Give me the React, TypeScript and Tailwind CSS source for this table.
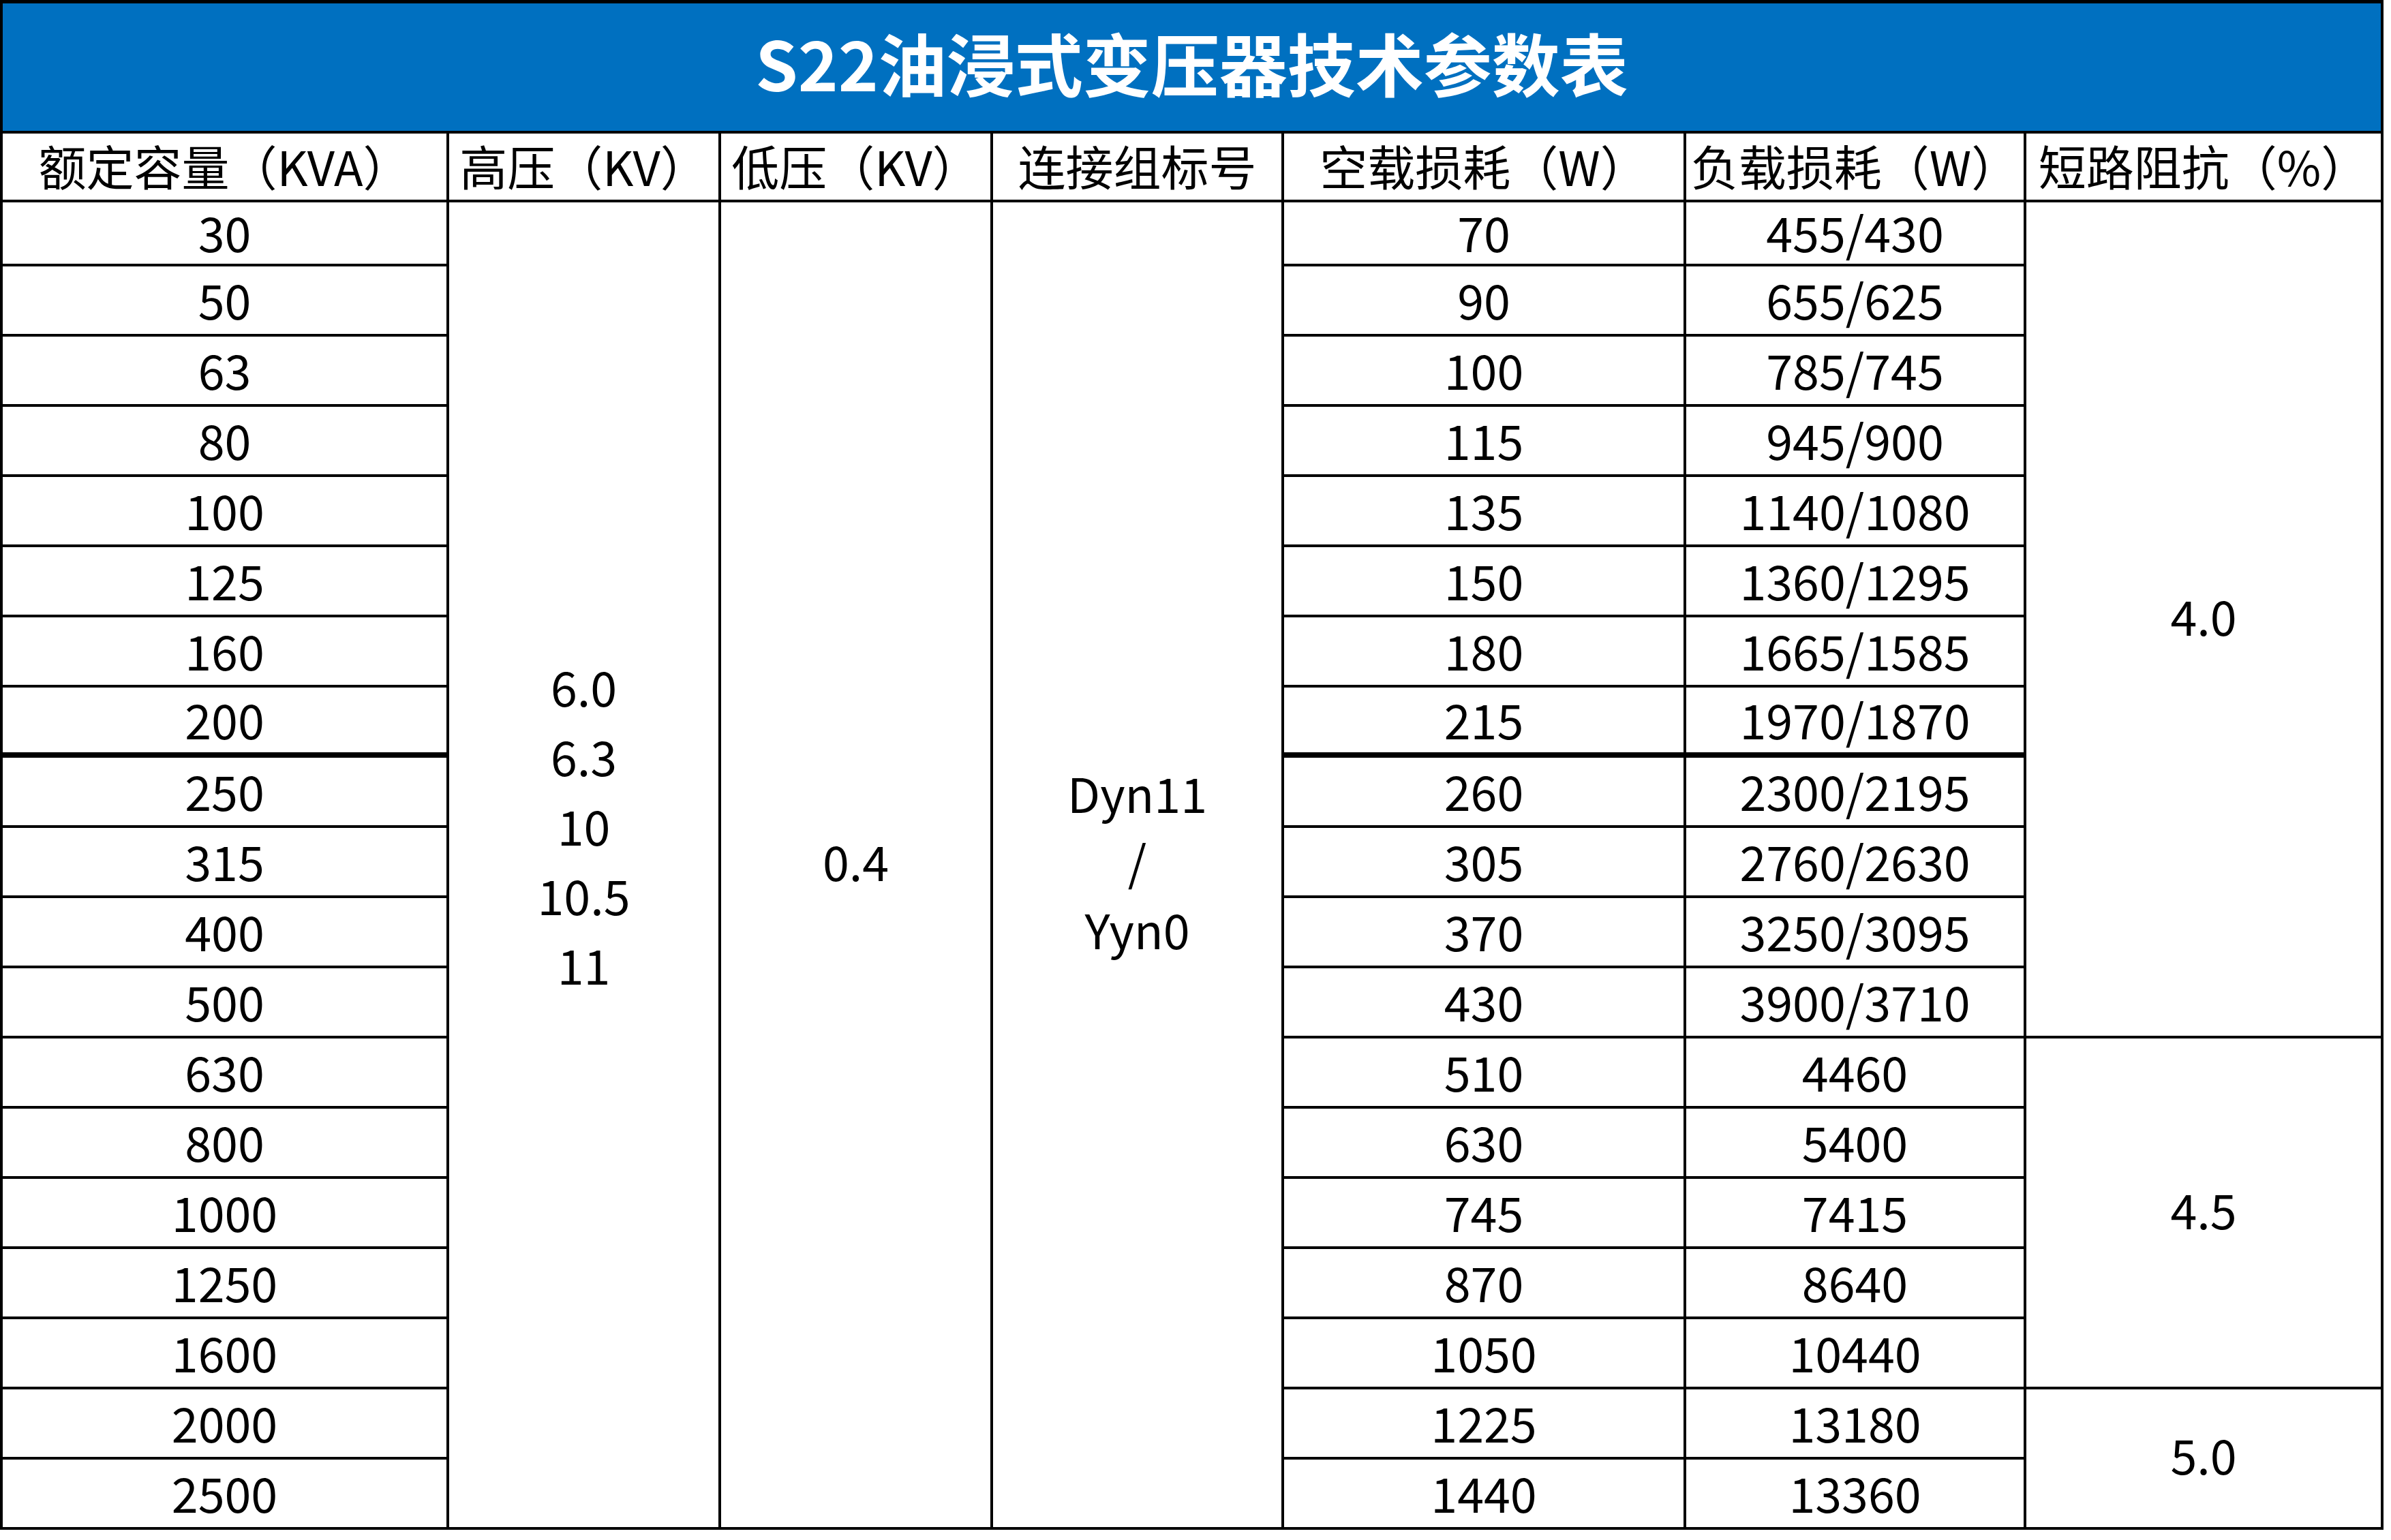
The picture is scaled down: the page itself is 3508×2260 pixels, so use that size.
const rows: { kva: string; noLoad: string; load: string }[] = [
  { kva: '30', noLoad: '70', load: '455/430' },
  { kva: '50', noLoad: '90', load: '655/625' },
  { kva: '63', noLoad: '100', load: '785/745' },
  { kva: '80', noLoad: '115', load: '945/900' },
  { kva: '100', noLoad: '135', load: '1140/1080' },
  { kva: '125', noLoad: '150', load: '1360/1295' },
  { kva: '160', noLoad: '180', load: '1665/1585' },
  { kva: '200', noLoad: '215', load: '1970/1870' },
  { kva: '250', noLoad: '260', load: '2300/2195' },
  { kva: '315', noLoad: '305', load: '2760/2630' },
  { kva: '400', noLoad: '370', load: '3250/3095' },
  { kva: '500', noLoad: '430', load: '3900/3710' },
  { kva: '630', noLoad: '510', load: '4460' },
  { kva: '800', noLoad: '630', load: '5400' },
  { kva: '1000', noLoad: '745', load: '7415' },
  { kva: '1250', noLoad: '870', load: '8640' },
  { kva: '1600', noLoad: '1050', load: '10440' },
  { kva: '2000', noLoad: '1225', load: '13180' },
  { kva: '2500', noLoad: '1440', load: '13360' },
]

const headers = ['额定容量（KVA）', '高压（KV）', '低压（KV）', '连接组标号', '空载损耗（W）', '负载损耗（W）', '短路阻抗（%）']

// impedance groups: start row index -> value + span
const impedance: Record<number, { value: string; span: string }> = {
  0: { value: '4.0', span: 'row-span-12' },
  12: { value: '4.5', span: 'row-span-5' },
  17: { value: '5.0', span: 'row-span-2' },
}

const base = 'bg-white flex items-center justify-center text-black text-[70px] whitespace-nowrap'
const cell = base + ' leading-none pb-[4px]'
const merged = base + ' leading-none pb-[12px]'

export default function App() {
  return (
    <div className="min-h-screen bg-white font-['Noto_Sans_CJK_SC','Noto_Sans',sans-serif]">
      <div className="grid w-[3497px] grid-cols-[651px_395px_395px_423px_586px_495px_520px] grid-rows-[187px_97px_90px_repeat(18,99px)] gap-[4px] bg-black pt-[5px] px-[4px] pb-[4px]">
        {/* Title */}
        <div className="col-span-7 flex items-center justify-center bg-[#0070c0] pb-[16px] text-white text-[100px] font-bold leading-none">
          S22油浸式变压器技术参数表
        </div>

        {/* Header row */}
        {headers.map((h) => (
          <div key={h} className={cell}>
            {h}
          </div>
        ))}

        {rows.map((r, i) => {
          const thick = i === 7 ? ' border-b-4 border-black' : ''
          return [
            <div key={`kva-${i}`} className={cell + thick}>
              {r.kva}
            </div>,
            i === 0 && (
              <div key="hv" className={base + ' row-span-19 flex-col pb-[116px]'}>
                <span className="block leading-[102px]">6.0</span>
                <span className="block leading-[102px]">6.3</span>
                <span className="block leading-[102px]">10</span>
                <span className="block leading-[102px]">10.5</span>
                <span className="block leading-[102px]">11</span>
              </div>
            ),
            i === 0 && (
              <div key="lv" className={merged + ' row-span-19'}>
                0.4
              </div>
            ),
            i === 0 && (
              <div key="group" className={base + ' row-span-19 flex-col pb-[12px]'}>
                <span className="block leading-[100px]">Dyn11</span>
                <span className="block leading-[100px]">/</span>
                <span className="block leading-[100px]">Yyn0</span>
              </div>
            ),
            <div key={`nl-${i}`} className={cell + thick}>
              {r.noLoad}
            </div>,
            <div key={`ld-${i}`} className={cell + thick}>
              {r.load}
            </div>,
            impedance[i] && (
              <div key={`imp-${i}`} className={merged + ' ' + impedance[i].span}>
                {impedance[i].value}
              </div>
            ),
          ]
        })}
      </div>
    </div>
  )
}
